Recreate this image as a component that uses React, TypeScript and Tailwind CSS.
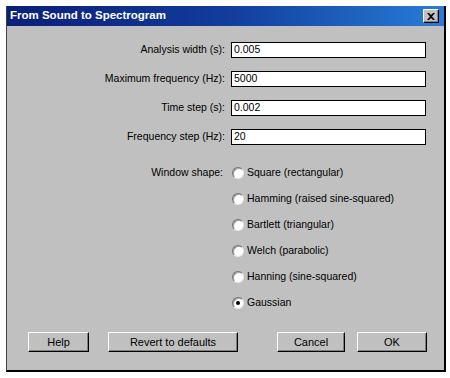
import React, { useState } from "react";

const fields = [
  { label: "Analysis width (s):", value: "0.005" },
  { label: "Maximum frequency (Hz):", value: "5000" },
  { label: "Time step (s):", value: "0.002" },
  { label: "Frequency step (Hz):", value: "20" },
];

const shapes = [
  "Square (rectangular)",
  "Hamming (raised sine-squared)",
  "Bartlett (triangular)",
  "Welch (parabolic)",
  "Hanning (sine-squared)",
  "Gaussian",
];

function Button({ label, w }: { label: string; w: string }) {
  return (
    <button
      className={`${w} h-[20px] bg-[#c0c0c0] border-t border-l border-t-white border-l-white border-r border-b border-r-black border-b-black shadow-[inset_-1px_-1px_0_#808080] text-[11px] text-black flex items-center justify-center`}
    >
      {label}
    </button>
  );
}

export default function App() {
  const [shape, setShape] = useState(5);

  return (
    <div
      className="w-[450px] h-[378px] bg-white pt-[6px] pl-[6px]"
      style={{ fontFamily: '"Liberation Sans", Arial, sans-serif' }}
    >
      {/* Dialog window */}
      <div className="w-[440px] h-[366px] bg-[#c0c0c0] border-l border-l-[#404040] border-r-2 border-b-2 border-r-black border-b-black flex flex-col">
        {/* Title bar */}
        <div className="h-[20px] bg-gradient-to-r from-[#0a1f78] via-[#123c9c] to-[#2a7cd8] flex items-center justify-between pl-[3px] pr-[5px]">
          <span className="text-white font-bold text-[11.5px] leading-none">From Sound to Spectrogram</span>
          <div className="w-[16px] h-[14px] bg-[#c0c0c0] border-t border-l border-t-white border-l-white border-r border-b border-r-black border-b-black shadow-[inset_-1px_-1px_0_#808080] flex items-center justify-center">
            <svg width="8" height="7" viewBox="0 0 8 7">
              <path d="M0 0h2l2 2 2-2h2L5 3.5 8 7H6L4 5 2 7H0l3-3.5z" fill="black" />
            </svg>
          </div>
        </div>

        {/* Fields */}
        <div className="flex flex-col gap-[13px] pt-[16px]">
          {fields.map((f) => (
            <div key={f.label} className="flex items-center h-[16px]">
              <div className="w-[218px] text-right text-[10.5px] text-black">{f.label}</div>
              <div className="ml-[6px] w-[195px] h-[16px] bg-white border border-black flex items-center pl-[2px] text-[10.5px] text-black">
                {f.value}
              </div>
            </div>
          ))}
        </div>

        {/* Window shape */}
        <div className="flex mt-[20px]">
          <div className="w-[216px] h-[16px] flex items-center justify-end text-[10.5px] text-black">Window shape:</div>
          <div className="ml-[9px] flex flex-col gap-[10px]">
            {shapes.map((s, i) => (
              <div key={s} className="flex items-center h-[16px] cursor-pointer" onClick={() => setShape(i)}>
                <div className="w-[12px] h-[12px] rounded-full bg-white border-t border-l border-t-[#707070] border-l-[#707070] border-r border-b border-r-[#e8e8e8] border-b-[#e8e8e8] shadow-[inset_1px_1px_0_#a0a0a0] flex items-center justify-center">
                  {shape === i && <div className="w-[4px] h-[4px] rounded-full bg-black" />}
                </div>
                <span className="ml-[3px] text-[10.5px] text-black">{s}</span>
              </div>
            ))}
          </div>
        </div>

        {/* Buttons */}
        <div className="mt-auto mb-[18px] flex items-center pl-[21px] pr-[17px]">
          <Button label="Help" w="w-[61px]" />
          <Button label="Revert to defaults" w="w-[130px] ml-[19px]" />
          <div className="flex-1" />
          <Button label="Cancel" w="w-[68px]" />
          <Button label="OK" w="w-[70px] ml-[12px]" />
        </div>
      </div>
    </div>
  );
}
